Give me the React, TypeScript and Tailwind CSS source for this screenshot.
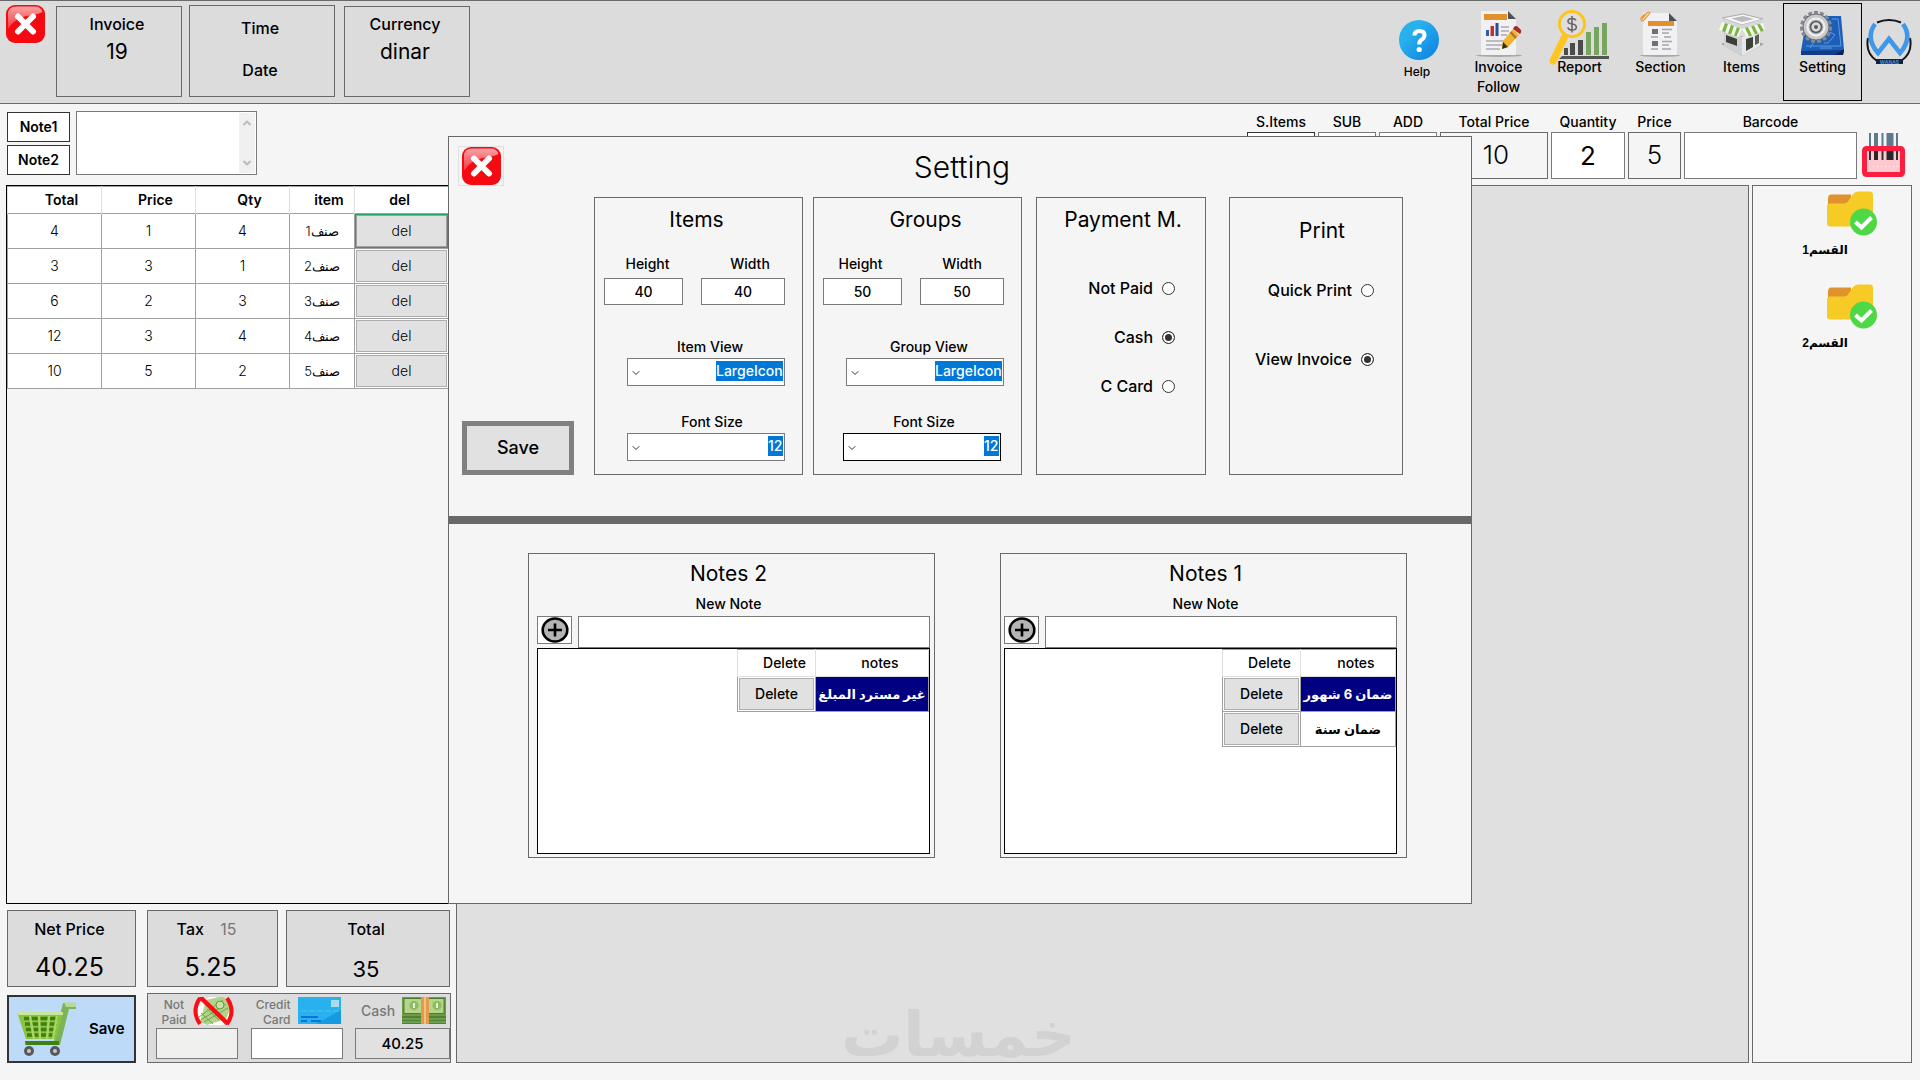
import type { ReactNode } from "react";
import { ChevronDown, ChevronUp } from "lucide-react";

const invoiceRows = [
  { total: 4, price: 1, qty: 4, item: "صنف1" },
  { total: 3, price: 3, qty: 1, item: "صنف2" },
  { total: 6, price: 2, qty: 3, item: "صنف3" },
  { total: 12, price: 3, qty: 4, item: "صنف4" },
  { total: 10, price: 5, qty: 2, item: "صنف5" },
];

const sections = ["القسم1", "القسم2"];

/* ---------- icons ---------- */

function CloseIcon() {
  return (
    <svg className="h-[38px] w-[39px]" viewBox="0 0 39 38" aria-hidden="true">
      <defs>
        <linearGradient id="shine" x1="0" y1="0" x2="0" y2="1">
          <stop offset="0" stopColor="#f9a3a5" />
          <stop offset="1" stopColor="#f5333a" />
        </linearGradient>
      </defs>
      <rect x="0" y="0" width="39" height="38" rx="9" fill="#f40a10" />
      <path d="M2 24V9Q2 1.500 10 1.500H29Q35 1.500 36.500 7Q30 10 20 11Q8 14 2 24Z" fill="url(#shine)" />
      <path d="M12 11.500L27 26.500M27 11.500L12 26.500" stroke="#fff" strokeWidth="6" strokeLinecap="round" />
    </svg>
  );
}

function HelpIcon() {
  return (
    <svg className="size-10" viewBox="0 0 40 40" aria-hidden="true">
      <defs>
        <linearGradient id="help" x1="0" y1="0" x2="1" y2="1">
          <stop offset="0.3" stopColor="#29b1ee" />
          <stop offset="1" stopColor="#0a7fe0" />
        </linearGradient>
      </defs>
      <circle cx="20" cy="20" r="20" fill="url(#help)" />
      <path d="M15.500 15.500Q15.500 11 20.500 11Q25.500 11 25.500 15.200Q25.500 18 22.500 19.800Q20.200 21.200 20.200 24.500" fill="none" stroke="#fff" strokeWidth="4" />
      <circle cx="20.200" cy="29.500" r="2.600" fill="#fff" />
    </svg>
  );
}

function InvoiceIcon() {
  return (
    <svg className="h-[47px] w-[46px]" viewBox="0 0 46 47" aria-hidden="true">
      <ellipse cx="23" cy="45.500" rx="23" ry="1.500" fill="#a8a8a8" />
      <path d="M5 1H32L40 9V45H5Z" fill="#f1f1f3" />
      <path d="M32 1V9H40Z" fill="#4d5055" />
      <rect x="8" y="4" width="23" height="6" fill="#e0912b" />
      <rect x="10" y="20" width="3" height="6" fill="#2b5fae" />
      <rect x="14.500" y="16" width="3.500" height="10" fill="#c5312a" />
      <rect x="19.500" y="13" width="3" height="13" fill="#2b4f96" />
      <path d="M25 17H33M25 21H33M25 25H31M10 31H28M10 35H26M10 39H24" stroke="#a9abb0" strokeWidth="1.500" />
      <path d="M37 19L43 25L32 37L26 39L27 31Z" fill="#f3b32c" />
      <path d="M34.500 22L40 28" stroke="#a0703a" strokeWidth="2" />
      <path d="M38 17Q40 15 42 17L45 20Q46 22 44 24L37 19Z" fill="#a92a22" />
      <path d="M27 32L26 39L32 37Z" fill="#3b2b10" />
    </svg>
  );
}

function ReportIcon() {
  return (
    <svg className="h-[56px] w-[62px]" viewBox="0 0 62 56" aria-hidden="true">
      <path d="M13 46H60V49H10Z" fill="#555" />
      <rect x="15" y="38" width="4" height="7" fill="#4b4b4b" />
      <rect x="21" y="33" width="5" height="12" fill="#4b4b4b" />
      <rect x="29" y="30" width="5" height="15" fill="#4b4b4b" />
      <rect x="37" y="22" width="5" height="23" fill="#77a55f" />
      <rect x="45" y="17" width="5" height="28" fill="#77a55f" />
      <rect x="53" y="13" width="5" height="32" fill="#77a55f" />
      <path d="M16 26L4 51" stroke="#fdc51f" strokeWidth="7" strokeLinecap="round" />
      <circle cx="23" cy="14" r="12.500" fill="#dedede" stroke="#fdc51f" strokeWidth="3" />
      <path d="M27 10.500Q26 8.500 23 8.500Q19 8.500 19 11.300Q19 13.500 23 14Q27.300 14.600 27.300 17.200Q27.300 20 23 20Q19.500 20 18.800 17.500M23 6V22.500" fill="none" stroke="#666" strokeWidth="1.600" />
    </svg>
  );
}

function SectionIcon() {
  return (
    <svg className="h-[47px] w-[41px]" viewBox="0 0 41 47" aria-hidden="true">
      <ellipse cx="20" cy="45.500" rx="20" ry="1.500" fill="#a8a8a8" />
      <path d="M3 3H29L37 11V45H3Z" fill="#f1f1f3" />
      <path d="M29 3V11H37Z" fill="#4d5055" />
      <rect x="8" y="11" width="26" height="5" fill="#e0912b" />
      <rect x="12" y="19" width="6" height="5" fill="#6d7075" />
      <rect x="12" y="31" width="6" height="5" fill="#6d7075" />
      <path d="M22 19.500H32M22 23H29M11 27H18M24 27H31M22 31.500H32M22 35H29M11 39H18M22 39H31" stroke="#a3a5aa" strokeWidth="1.500" />
      <path d="M2 9L7 3Q9 1 10 3L4 10Q2 12 1 10V8L5 4" fill="none" stroke="#e89a3c" strokeWidth="1.200" />
    </svg>
  );
}

function StoreIcon() {
  return (
    <svg className="h-[47px] w-[46px]" viewBox="0 0 46 47" aria-hidden="true">
      <path d="M2 34L23 46L45 34L23 26Z" fill="#a3a3a3" />
      <path d="M5 20L23 27V46L5 36Z" fill="#cfd0d2" />
      <path d="M41 20L23 27V46L41 36Z" fill="#e6e7e8" />
      <path d="M7 25L18 29V36L7 32Z" fill="#3c3f37" />
      <path d="M27 29L34 27V37L27 41Z" fill="#3c4238" />
      <path d="M36 26L40 24V33L36 35Z" fill="#5a6152" />
      <path d="M3 8L24 4L44 9L23 15Z" fill="#f6f6f7" stroke="#a9abae" />
      <path d="M12 8.500L24 6L35 9L23 12Z" fill="#b9bbbe" />
      <path d="M3 8L23 15V19L3 12ZM44 9L23 15V19L44 13Z" fill="#d6d7d9" />
      <path d="M3 12L23 19L19 27L0 20Z" fill="#f7faef" />
      <path d="M44 13L23 19L28 27L46 20Z" fill="#f7faef" />
      <path d="M6 13L9 14L6 22.500L3 21ZM12 15L15 16L12 24.500L9 23.500ZM18 17L21 18.500L17.500 26.500L15 25.500ZM26 18L29 17L33 25.500L30 26.500ZM32 16.500L35 15.500L39 23.500L36 24.500ZM38 14.500L41 14L45 20.500L42 22Z" fill="#7db544" />
    </svg>
  );
}

const gearTeeth = [0, 24, 48, 72, 96, 120, 144, 168, 192, 216, 240, 264, 288, 312, 336];

function SettingIcon() {
  return (
    <svg className="h-[47px] w-[45px]" viewBox="0 0 45 47" aria-hidden="true">
      <path d="M7 6H41L44 40L43 45H1V41Z" fill="#1d5fb8" />
      <path d="M1 41L44 40L43 45H1Z" fill="#123c86" />
      <path d="M32 9H38L41 36H6M30 22L35 25L28 33H24M10 38L14 32M20 38H32" fill="none" stroke="#5e9be0" strokeWidth="1" />
      <path d="M35 45L44 39L43 45Z" fill="#101f5c" />
      <g fill="#85888d">
        {gearTeeth.map((a) => (
          <rect key={a} x="14" y="1" width="4" height="6" transform={`rotate(${a} 16 17)`} />
        ))}
      </g>
      <circle cx="16" cy="17" r="13" fill="#c9cacc" stroke="#6d7075" />
      <circle cx="16" cy="17" r="8.500" fill="#b4b6b9" stroke="#f2f2f2" strokeWidth="2" />
      <circle cx="16" cy="17" r="5.500" fill="#d8d9db" stroke="#54575c" strokeWidth="1.500" />
      <circle cx="16" cy="17" r="2" fill="#5a5d62" />
    </svg>
  );
}

function WanasLogo() {
  return (
    <svg className="h-[47px] w-[46px]" viewBox="0 0 46 47" aria-label="Wanas">
      <path d="M11 3.500Q23 -1.500 35 3.500" fill="none" stroke="#15171f" strokeWidth="2" />
      <path d="M2 19Q-1 34 11 42M44 19Q47 34 35 42" fill="none" stroke="#15171f" strokeWidth="2" />
      <path d="M9 5Q-1 19 12 34L23 20L34 34Q47 19 37 5" fill="none" stroke="#3f97ea" strokeWidth="4.500" />
      <rect x="10" y="40" width="27" height="5" fill="#14213f" />
      <text x="23.500" y="44.500" textAnchor="middle" fill="#4a8fd8" className="text-[5px] font-bold">WANAS</text>
    </svg>
  );
}

function BarcodeIcon() {
  return (
    <svg className="h-[45px] w-[43px]" viewBox="0 0 43 45" aria-hidden="true">
      <path d="M8 0V14M20.500 0V14M35 0V14" stroke="#5d7a8e" strokeWidth="2" />
      <path d="M14 0V14" stroke="#5d7a8e" strokeWidth="4" />
      <path d="M28 0V14" stroke="#5d7a8e" strokeWidth="7" />
      <rect x="2.500" y="15.500" width="38" height="26" rx="2" fill="#fcc9ce" stroke="#fd1d40" strokeWidth="5" />
      <path d="M8 18V27M20.500 18V27M35 18V27" stroke="#3b2c3a" strokeWidth="2" />
      <path d="M14 18V27" stroke="#2c2430" strokeWidth="4" />
      <path d="M28 18V27" stroke="#2c2430" strokeWidth="7" />
      <path d="M11 33.500H36" stroke="#fff" strokeDasharray="1 3" />
    </svg>
  );
}

function FolderIcon() {
  return (
    <svg className="h-[45px] w-[51px]" viewBox="0 0 51 45" aria-hidden="true">
      <path d="M1 8Q1 3.500 4 3.500H24V16H1Z" fill="#e0922e" />
      <path d="M0 15Q0 12.500 3 12.500H17Q20 12.500 22 9L26 3Q28 0.500 31 0.500H43Q46 0.500 46 4V32Q46 35.500 43 35.500H3Q0 35.500 0 32Z" fill="#f7cb25" />
      <circle cx="36.500" cy="31" r="13.500" fill="#4fd846" />
      <path d="M28.500 31L34.500 36.500L44.500 26.500" fill="none" stroke="#fff" strokeWidth="4" />
    </svg>
  );
}

function PlusIcon() {
  return (
    <svg className="h-[26px] w-[28px]" viewBox="0 0 28 26" aria-hidden="true">
      <ellipse cx="14" cy="13" rx="12.300" ry="11.500" fill="#b4b4b4" stroke="#000" strokeWidth="2.600" />
      <path d="M7 13H21M14 6.500V19.500" stroke="#000" strokeWidth="2.600" />
    </svg>
  );
}

function CartIcon() {
  return (
    <svg className="h-[54px] w-[60px]" viewBox="0 0 60 54" aria-hidden="true">
      <path d="M46 1H59V7H52L43 43H8V39H37Z" fill="#7cb356" />
      <path d="M47 0.500H59V5H49Z" fill="#b6da8f" />
      <path d="M0 10H46L39 37H9Z" fill="#8ac43f" />
      <path d="M0 10H46V13H1Z" fill="#c9e59e" />
      <path d="M7 16.500H41M8 22H40M9 27.500H39M10 33H38" stroke="#3f8110" strokeWidth="3.500" />
      <path d="M13 14L17 37M22 14L23 37M32 14L30 37M40 14L36 37" stroke="#a9d566" strokeWidth="2.500" />
      <path d="M8 39H42V43H9Z" fill="#3f8110" />
      <circle cx="12" cy="49" r="5" fill="#55585c" />
      <circle cx="38" cy="49" r="5" fill="#55585c" />
      <circle cx="12" cy="49" r="2" fill="#c9cacc" />
      <circle cx="38" cy="49" r="2" fill="#c9cacc" />
    </svg>
  );
}

function NotPaidIcon() {
  return (
    <svg className="h-7 w-[41px]" viewBox="0 0 41 28" aria-hidden="true">
      <ellipse cx="20.500" cy="15" rx="18" ry="15" fill="#fff" />
      <path d="M7 25L13 3L30 -1L38 10L33 22L14 28Z" fill="#b3d38a" />
      <path d="M6 20L30 3M8 23L33 7M11 25L35 11M8 16L20 27M14 12L26 23" stroke="#6ba650" strokeWidth="1" />
      <circle cx="27" cy="8" r="4" fill="#c9e2a6" stroke="#5f9c47" />
      <path d="M7 1Q-2 14 7 27M34 1Q43 14 34 27" fill="none" stroke="#fb0d12" strokeWidth="4" />
      <path d="M7 0L35 27" stroke="#fb0d12" strokeWidth="4.500" />
    </svg>
  );
}

function CreditCardIcon() {
  return (
    <svg className="h-[27px] w-[43px]" viewBox="0 0 43 27" aria-hidden="true">
      <rect width="43" height="27" fill="#29b0ee" />
      <path d="M43 13V27H18Z" fill="#169be3" />
      <rect x="33" y="3" width="8" height="7" fill="#a8dcee" />
      <path d="M3 14H42" stroke="#4fc3f3" strokeDasharray="6 2" />
      <path d="M3 20H20M3 24H9M13 24H23" stroke="#0a72d8" strokeWidth="2" />
    </svg>
  );
}

function CashIcon() {
  return (
    <svg className="h-7 w-11" viewBox="0 0 44 28" aria-hidden="true">
      <rect width="44" height="20" fill="#6c9c45" />
      <rect x="2" y="1.500" width="40" height="15" fill="#b6d48a" stroke="#4b7d30" />
      <circle cx="12" cy="8.500" r="4.500" fill="#8cbb63" />
      <circle cx="35" cy="8.500" r="4.500" fill="#8cbb63" />
      <rect x="11" y="6" width="2" height="5" fill="#e6f2cf" />
      <rect x="34" y="6" width="2" height="5" fill="#e6f2cf" />
      <rect y="19" width="44" height="8" fill="#4f8236" />
      <path d="M0 22H44M0 25H44" stroke="#8cb766" />
      <rect x="19" width="8" height="27" fill="#e39a4a" />
      <rect x="22" width="2" height="27" fill="#f4c07e" />
    </svg>
  );
}

/* ---------- small parts ---------- */

function ToolButton({ icon, label, active }: { icon: ReactNode; label: string; active?: boolean }) {
  return (
    <button
      className={
        active
          ? "flex h-[98px] w-[79px] flex-col items-center border border-black pt-1.5 text-sm leading-5 font-medium"
          : "flex h-[98px] w-[79px] flex-col items-center pt-[7px] text-sm leading-5 font-medium"
      }
    >
      <span className="flex h-[47px] items-start justify-center">{icon}</span>
      <span className="relative">{label}</span>
    </button>
  );
}

function Field({ label, id, children }: { label: string; id: string; children: ReactNode }) {
  return (
    <div className="flex flex-col items-center">
      <label htmlFor={id} className="text-sm leading-[22px] font-medium whitespace-nowrap">
        {label}
      </label>
      {children}
    </div>
  );
}

function ComboBox({ id, value, dark }: { id: string; value: string; dark?: boolean }) {
  return (
    <div
      className={
        dark
          ? "flex h-7 w-[158px] items-start justify-between border border-black bg-white pt-0.5 pr-px pl-0.5"
          : "flex h-7 w-[158px] items-start justify-between border border-[#7a7a7a] bg-white pt-0.5 pr-px pl-0.5"
      }
    >
      <ChevronDown className="mt-1.5 size-3 text-[#333]" strokeWidth={2} />
      <select id={id} className="h-5 appearance-none bg-[#0078d7] text-sm leading-5 font-medium text-white">
        <option>{value}</option>
      </select>
    </div>
  );
}

function SizePanel({ title, view, name, size, dark }: { title: string; view: string; name: string; size: string; dark?: boolean }) {
  return (
    <fieldset className="flex h-[278px] w-[209px] flex-col border border-[#696969] px-[9px]">
      <h3 className={dark ? "pt-2 pl-4 text-center text-[21px] leading-7" : "pt-2 pr-1 text-center text-[21px] leading-7"}>{title}</h3>
      <div className="mt-5 flex gap-[18px] text-sm font-medium">
        <div className="flex flex-col items-center">
          <label htmlFor={`${name}-height`} className={dark ? "pr-1 leading-5" : "pl-2 leading-5"}>Height</label>
          <input id={`${name}-height`} defaultValue={size} className="mt-1 h-[27px] w-[79px] border border-[#7a7a7a] bg-white text-center" />
        </div>
        <div className="flex flex-col items-center">
          <label htmlFor={`${name}-width`} className={dark ? "leading-5" : "pl-3.5 leading-5"}>Width</label>
          <input id={`${name}-width`} defaultValue={size} className="mt-1 h-[27px] w-[84px] border border-[#7a7a7a] bg-white text-center" />
        </div>
      </div>
      <div className="mt-[31px] flex flex-col items-end pr-2 text-sm font-medium">
        <label htmlFor={`${name}-view`} className="w-[158px] pl-2 text-center leading-[22px]">{view}</label>
        <ComboBox id={`${name}-view`} value="LargeIcon" />
      </div>
      <div className={dark ? "mt-[25px] flex flex-col items-end pr-[11px] text-sm font-medium" : "mt-[25px] flex flex-col items-end pr-2 text-sm font-medium"}>
        <label htmlFor={`${name}-font`} className={dark ? "w-[158px] pl-1 text-center leading-[22px]" : "w-[158px] pl-3 text-center leading-[22px]"}>Font Size</label>
        <ComboBox id={`${name}-font`} value="12" dark={dark} />
      </div>
    </fieldset>
  );
}

function Radio({ name, label, checked }: { name: string; label: string; checked?: boolean }) {
  return (
    <label className="flex items-center justify-end gap-[9px] text-base leading-5 font-medium">
      {label}
      <input
        type="radio"
        name={name}
        defaultChecked={checked}
        className="size-[13px] appearance-none rounded-full border border-[#333] bg-white checked:bg-[#333] checked:shadow-[inset_0_0_0_2px_white]"
      />
    </label>
  );
}

function NotesPanel({ title, notes, first }: { title: string; notes: string[]; first?: boolean }) {
  return (
    <section className={first ? "h-[305px] w-[407px] border border-[#696969] pr-[9px] pl-[3px]" : "h-[305px] w-[407px] border border-[#696969] pr-1 pl-2"}>
      <div className={first ? "flex flex-col pl-2.5 text-center" : "flex flex-col pr-2.5 text-center"}>
        <h3 className="pt-1.5 text-[21px] leading-7">{title}</h3>
        <label htmlFor={title} className="mt-1.5 text-sm leading-5 font-medium">New Note</label>
      </div>
      <div className="mt-0.5 flex items-start justify-between">
        <button aria-label="Add note" className="flex h-7 w-[35px] items-center justify-center border border-[#7a7a7a] bg-white">
          <PlusIcon />
        </button>
        <input id={title} className="h-8 w-[352px] border border-[#7a7a7a] bg-white px-2 text-sm" />
      </div>
      <div className="h-[206px] border border-black bg-white">
        <table className="ml-auto table-fixed border-collapse text-sm font-medium">
          <thead>
            <tr className="h-[27px]">
              <th className="w-[78px] border border-[#e0e0e0] border-t-[#a0a0a0] pl-4 font-medium">Delete</th>
              <th className={first ? "w-[95px] border border-[#e0e0e0] border-t-[#a0a0a0] pl-4 font-medium" : "w-[113px] border border-[#e0e0e0] border-t-[#a0a0a0] pl-4 font-medium"}>
                notes
              </th>
            </tr>
          </thead>
          <tbody>
            {notes.map((note, i) => (
              <tr key={note} className="h-[35px]">
                <td className="border border-[#a0a0a0] p-px">
                  <button className="block h-8 w-full border border-[#adadad] bg-[#e1e1e1]">Delete</button>
                </td>
                <td
                  dir="rtl"
                  className={
                    i === 0
                      ? "border border-[#a0a0a0] bg-[#000080] p-0 text-center text-[13px] font-bold whitespace-nowrap text-white"
                      : "border border-[#a0a0a0] p-0 text-center text-[13px] font-bold whitespace-nowrap"
                  }
                >
                  {note}
                </td>
              </tr>
            ))}
          </tbody>
        </table>
      </div>
    </section>
  );
}

/* ---------- screen parts ---------- */

function Header() {
  return (
    <header className="flex h-[104px] items-start border-y border-[#696969] bg-[#dcdcdc]">
      <button aria-label="Close" className="mt-[3px] ml-0.5 flex h-10 w-[46px] items-center justify-center border border-[#e0e0e0]">
        <CloseIcon />
      </button>
      <div className="mt-[5px] ml-2 h-[91px] w-[126px] border border-[#696969] pt-[7px] pr-1 text-center">
        <p className="text-base leading-5 font-medium">Invoice</p>
        <p className="pt-1 text-[21px] leading-7">19</p>
      </div>
      <div className="mt-1 ml-[7px] h-[92px] w-[146px] border border-[#696969] pt-3 pr-1 text-center text-base leading-5 font-medium">
        <p>Time</p>
        <p className="pt-[22px]">Date</p>
      </div>
      <div className="mt-[5px] ml-[9px] h-[91px] w-[126px] border border-[#696969] pt-[7px] pr-1 text-center">
        <p className="text-base leading-5 font-medium">Currency</p>
        <p className="pt-1 text-[21px] leading-7">dinar</p>
      </div>
      <nav className="ml-auto flex items-start gap-0.5 pt-0.5 pr-2">
        <button className="mr-2 flex w-[60px] flex-col items-center pt-[17px] text-xs leading-5 font-medium">
          <HelpIcon />
          <span className="pt-0.5 pr-1">Help</span>
        </button>
        <ToolButton icon={<InvoiceIcon />} label="Invoice Follow" />
        <ToolButton icon={<ReportIcon />} label="Report" />
        <ToolButton icon={<SectionIcon />} label="Section" />
        <ToolButton icon={<StoreIcon />} label="Items" />
        <ToolButton icon={<SettingIcon />} label="Setting" active />
        <div className="pt-4 pl-0.5">
          <WanasLogo />
        </div>
      </nav>
    </header>
  );
}

function EntryBar() {
  return (
    <div className="flex h-[81px] items-start justify-between pt-[7px] pr-[15px] pl-[7px]">
      <div className="flex gap-1.5">
        <div className="flex flex-col gap-[3px] pt-px text-sm font-semibold">
          <button className="h-[30px] w-[63px] border border-[#333] bg-white">Note1</button>
          <button className="h-[30px] w-[63px] border border-[#333] bg-white">Note2</button>
        </div>
        <div className="flex h-16 w-[181px] border border-[#7a7a7a] bg-white p-px">
          <textarea aria-label="Note" className="min-w-0 flex-1 resize-none" />
          <div className="flex w-4 flex-col items-center justify-between bg-[#f0f0f0] py-1 text-[#bcbcbc]">
            <ChevronUp className="size-3" strokeWidth={4} />
            <ChevronDown className="size-3" strokeWidth={4} />
          </div>
        </div>
      </div>
      <div className="flex gap-[3px]">
        <Field label="S.Items" id="sitems">
          <input id="sitems" className="-mt-px h-[47px] w-[68px] border border-[#333] bg-white" />
        </Field>
        <Field label="SUB" id="sub">
          <input id="sub" className="-mt-px h-[47px] w-[58px] border border-[#7a7a7a] bg-white" />
        </Field>
        <Field label="ADD" id="add">
          <input id="add" className="-mt-px h-[47px] w-[58px] border border-[#7a7a7a] bg-white" />
        </Field>
        <Field label="Total Price" id="total-price">
          <output id="total-price" className="-mt-px h-[47px] w-[108px] border border-[#696969] pt-0.5 pl-1 text-center text-[26px] leading-10 font-light">10</output>
        </Field>
        <Field label="Quantity" id="quantity">
          <input id="quantity" defaultValue="2" className="-mt-px h-[47px] w-[74px] border border-[#7a7a7a] bg-white text-center text-[26px]" />
        </Field>
        <Field label="Price" id="price">
          <output id="price" className="-mt-px h-[47px] w-[53px] border border-[#696969] pt-0.5 text-center text-[26px] leading-10 font-light">5</output>
        </Field>
        <Field label="Barcode" id="barcode">
          <input id="barcode" className="-mt-px h-[47px] w-[173px] border border-[#7a7a7a] bg-white px-2 text-xl" />
        </Field>
        <div className="pt-[22px] pl-0.5">
          <BarcodeIcon />
        </div>
      </div>
    </div>
  );
}

function InvoiceTable() {
  return (
    <div className="min-h-0 flex-1 border border-black">
      <table className="w-[442px] table-fixed border-collapse bg-white text-sm">
        <colgroup>
          <col className="w-[94px]" />
          <col className="w-[94px]" />
          <col className="w-[94px]" />
          <col className="w-[65px]" />
          <col className="w-[94px]" />
        </colgroup>
        <thead>
          <tr className="h-[27px] [&>th]:border-x [&>th]:border-t [&>th]:border-x-[#e0e0e0] [&>th]:border-t-[#a0a0a0] [&>th]:font-semibold">
            <th className="pl-3.5">Total</th>
            <th className="pl-3.5">Price</th>
            <th className="pl-3.5">Qty</th>
            <th className="pl-3.5">item</th>
            <th className="pr-1">del</th>
          </tr>
        </thead>
        <tbody className="font-light">
          {invoiceRows.map((row, i) => (
            <tr key={row.item} className="h-[35px] text-center [&>td]:border [&>td]:border-[#a0a0a0] [&>td]:p-px">
              <td>{row.total}</td>
              <td>{row.price}</td>
              <td>{row.qty}</td>
              <td dir="rtl" className="text-[13px]">{row.item}</td>
              <td>
                <button
                  className={
                    i === 0
                      ? "block h-8 w-full border border-[#a0a0a0] bg-[#e1e1e1] outline-1 outline-[#21a366]"
                      : "block h-8 w-full border border-[#adadad] bg-[#e1e1e1]"
                  }
                >
                  del
                </button>
              </td>
            </tr>
          ))}
        </tbody>
      </table>
    </div>
  );
}

function Totals() {
  return (
    <div className="mt-1.5 flex h-[77px] pl-px text-center">
      <div className="w-[129px] border border-[#696969] bg-[#dcdcdc] pt-2 pr-1">
        <p className="text-base leading-5 font-medium">Net Price</p>
        <p className="pt-3 text-[25px] leading-8">40.25</p>
      </div>
      <div className="ml-[11px] w-[131px] border border-[#696969] bg-[#dcdcdc] pt-2 pr-1">
        <p className="pr-2 text-base leading-5 font-medium">
          Tax <span className="pl-3 font-normal text-[#777]">15</span>
        </p>
        <p className="pt-3 text-[25px] leading-8">5.25</p>
      </div>
      <div className="ml-2 w-[164px] border border-[#696969] bg-[#dcdcdc] pt-2 pr-1">
        <p className="text-base leading-5 font-medium">Total</p>
        <p className="pt-3.5 text-[22px] leading-8">35</p>
      </div>
    </div>
  );
}

function PaymentBar() {
  return (
    <div className="mt-1.5 flex h-[70px] items-end pl-px">
      <button className="flex h-[68px] w-[129px] items-center border-2 border-[#333] bg-[#bddbf9] pl-2 text-[15px] font-semibold">
        <CartIcon />
        <span className="pl-3">Save</span>
      </button>
      <div className="ml-[11px] flex h-[70px] w-[304px] justify-between border border-[#696969] bg-[#dcdcdc] pt-[3px] pl-2 font-medium text-[#777]">
        <div className="w-[82px]">
          <label htmlFor="not-paid" className="flex h-[31px] items-start justify-between pr-1 pl-1 text-xs leading-[15px]">
            <span className="w-7 text-center">Not Paid</span>
            <NotPaidIcon />
          </label>
          <input id="not-paid" className="h-[31px] w-full border border-[#7a7a7a] bg-[#f0f0ef] text-center" />
        </div>
        <div className="w-[92px]">
          <label htmlFor="credit-card" className="flex h-[31px] items-start justify-between pr-0.5 pl-1 text-xs leading-[15px]">
            <span className="w-9 text-right">Credit Card</span>
            <CreditCardIcon />
          </label>
          <input id="credit-card" className="h-[31px] w-full border border-[#7a7a7a] bg-white text-center text-black" />
        </div>
        <div className="w-[95px]">
          <label htmlFor="cash" className="flex h-[31px] items-start justify-between pr-1 pl-1.5 text-sm leading-7">
            <span>Cash</span>
            <CashIcon />
          </label>
          <input id="cash" defaultValue="40.25" className="h-[31px] w-full border border-[#7a7a7a] bg-[#e1e1e1] text-center text-[15px] text-black" />
        </div>
      </div>
    </div>
  );
}

function SettingDialog() {
  return (
    <div role="dialog" aria-label="Setting" className="h-[768px] w-[1024px] border border-[#696969] bg-[#f5f5f5]">
      <div className="relative flex h-[60px] items-start justify-center pt-2.5">
        <button aria-label="Close setting" className="absolute top-[9px] left-[9px] flex h-10 w-[46px] items-center justify-center border border-[#e0e0e0]">
          <CloseIcon />
        </button>
        <h2 className="pl-1 text-[30px] leading-10 font-light">Setting</h2>
      </div>
      <div className="flex items-end pl-[13px]">
        <button className="h-[54px] w-[112px] border-[5px] border-[#808080] bg-[#e1e1e1] text-lg font-medium">Save</button>
        <div className="ml-5 flex gap-2.5">
          <SizePanel title="Items" view="Item View" name="items" size="40" />
          <SizePanel title="Groups" view="Group View" name="groups" size="50" dark />
        </div>
        <fieldset className="ml-3.5 h-[278px] w-[170px] min-w-0 border border-[#696969]">
          <h3 className="pt-2 pl-1 text-center text-[21px] leading-7 whitespace-nowrap">Payment M.</h3>
          <div className="flex flex-col gap-[29px] pt-[44px] pr-[30px]">
            <Radio name="payment" label="Not Paid" />
            <Radio name="payment" label="Cash" checked />
            <Radio name="payment" label="C Card" />
          </div>
        </fieldset>
        <fieldset className="ml-[23px] h-[278px] w-[174px] min-w-0 border border-[#696969]">
          <h3 className="pt-[19px] pl-3 text-center text-[21px] leading-7">Print</h3>
          <div className="flex flex-col gap-[49px] pt-[35px] pr-7">
            <Radio name="print" label="Quick Print" />
            <Radio name="print" label="View Invoice" checked />
          </div>
        </fieldset>
      </div>
      <div className="mt-[41px] h-2 bg-[#696969]" />
      <div className="flex justify-between pt-[29px] pr-16 pl-[79px]">
        <NotesPanel title="Notes 2" notes={["غير مسترد المبلغ"]} />
        <NotesPanel title="Notes 1" notes={["ضمان 6 شهور", "ضمان سنة"]} first />
      </div>
    </div>
  );
}

export default function App() {
  return (
    <div className="relative flex min-h-screen flex-col bg-[#f5f5f5] font-[family-name:Inter,DejaVu_Sans,sans-serif] text-black">
      <Header />
      <EntryBar />
      <main className="flex flex-1 pr-2 pb-[17px] pl-1.5">
        <div className="flex w-[445px] flex-col">
          <InvoiceTable />
          <Totals />
          <PaymentBar />
        </div>
        <div className="ml-[5px] flex flex-1 items-end justify-center border border-[#696969] bg-[#e0e0e0] pr-72">
          <p dir="rtl" className="text-[62px] leading-[56px] font-bold text-[#d2d2d2]">خمسات</p>
        </div>
        <aside className="ml-[3px] flex w-40 flex-col items-center gap-[23px] border border-[#696969] pt-[5px] pr-3.5">
          {sections.map((name) => (
            <button key={name} className="flex h-[70px] flex-col items-center gap-1">
              <span className="pl-[54px]">
                <FolderIcon />
              </span>
              <span dir="rtl" className="font-[family-name:Liberation_Sans,DejaVu_Sans,sans-serif] text-xs leading-5 font-bold">{name}</span>
            </button>
          ))}
        </aside>
      </main>
      {/* setting window sits on top of the sales screen */}
      <div className="absolute inset-x-0 top-[136px] flex justify-center">
        <SettingDialog />
      </div>
    </div>
  );
}
